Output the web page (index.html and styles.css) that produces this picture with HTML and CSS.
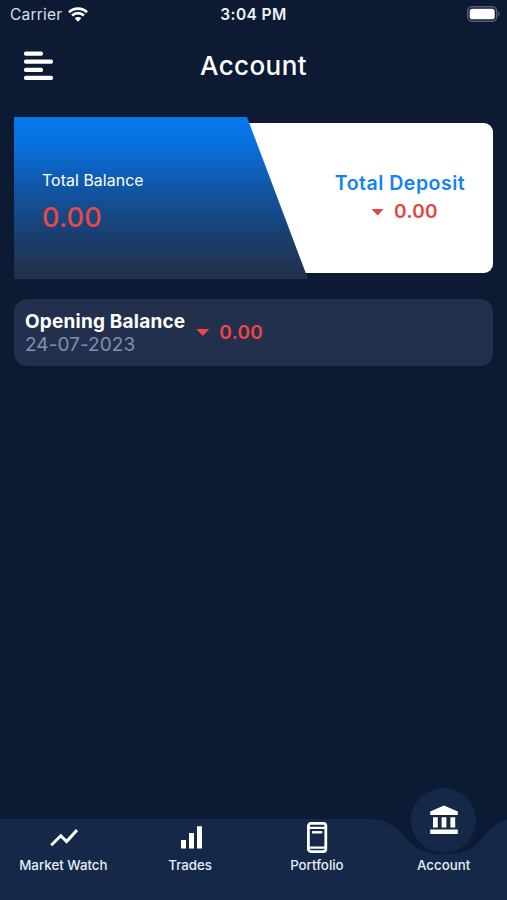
FILE: index.html
```
<!DOCTYPE html>
<html lang="en">
<head>
<meta charset="utf-8">
<title>Account</title>
<link rel="stylesheet" href="styles.css">
</head>
<body>
<div class="app">
  <div class="status">
    <div class="carrier"><span>Carrier</span>
      <svg width="20" height="15" viewBox="0 0 20 15" fill="none" stroke="#fff" stroke-width="2.7"><path d="M1 5.2C6 .3 14 .3 19 5.2M4.1 8.5c3.3-3.2 8.5-3.2 11.8 0"/><path d="M6.7 11.3c1.8-1.7 4.8-1.7 6.6 0L10 14.7z" fill="#fff" stroke="none"/></svg>
    </div>
    <span class="time">3:04 PM</span>
    <svg class="battery" width="33" height="16" viewBox="0 0 33 16"><rect x=".7" y=".7" width="29" height="14.6" rx="4.5" fill="none" stroke="#56617b" stroke-width="1.4"/><rect x="2.7" y="2.7" width="25" height="10.6" rx="2.6" fill="#fff"/><path d="M31.3 5.5c1.8.6 1.8 4.4 0 5z" fill="#56617b"/></svg>
  </div>
  <header class="header">
    <svg width="29" height="30" viewBox="0 0 29 30" fill="#fff"><rect x="0" y=".5" width="19" height="4.2" rx="1.7"/><rect x="0" y="8.6" width="29" height="4.2" rx="1.7"/><rect x="0" y="16.7" width="19" height="4.2" rx="1.7"/><rect x="0" y="24.8" width="29" height="4.2" rx="1.7"/></svg>
    <h1>Account</h1>
  </header>
  <main>
    <section class="summary">
      <div class="balance"><span class="label">Total Balance</span><span class="figure">0.00</span></div>
      <div class="deposit">
        <span class="label">Total Deposit</span>
        <span class="amount"><i class="down"></i>0.00</span>
      </div>
    </section>
    <section class="entry">
      <div class="what"><b>Opening Balance</b><span>24-07-2023</span></div>
      <span class="amount"><i class="down"></i>0.00</span>
    </section>
  </main>
  <nav class="nav">
    <svg class="bar" width="507" height="81" viewBox="0 0 507 81"><path d="M0 0H367C383 0 393 5 402 15C413 28 420 35 444 35S474 29 485 16C493 7 499 3 507 1V81H0Z" fill="#152848"/></svg>
    <a class="tab"><svg width="30" height="32" viewBox="0 0 30 32" fill="none" stroke="#fff" stroke-width="3"><path d="M3.2 24.3l9.6-9.5 5.8 5.8L29 9"/></svg><span>Market Watch</span></a>
    <a class="tab"><svg width="24" height="32" viewBox="0 0 24 32" fill="#fff"><path d="M3 19h5v8.500H3zM11 12h5v15.500h-5zM19 5.300h5v22.200h-5z"/></svg><span>Trades</span></a>
    <a class="tab"><svg width="22" height="32" viewBox="0 0 22 32" fill="none" stroke="#fff"><rect x="2.400" y="2.400" width="17.400" height="28.200" rx="2.500" stroke-width="2.800"/><path d="M3 6.900h16M3 26.600h16" stroke-width="2.200"/><path d="M6 11.300h10.300" stroke-width="2.400"/></svg><span>Portfolio</span></a>
    <a class="tab active"><i class="bubble"><svg width="28" height="30" viewBox="0 0 28 30" fill="#fff"><path d="M14 .5L27.800 6.500v3.500H.2V6.500zM3 12.300h4.800v10.200H3zM11.600 12.300h4.800v10.200h-4.800zM20.400 12.300h4.800v10.200h-4.800zM.2 24.600h27.600v4.400H.2z"/></svg></i><span>Account</span></a>
  </nav>
</div>
</body>
</html>
```
FILE: styles.css
```
* { box-sizing: border-box; }
body { margin: 0; background: #0c1a33; font-family: Inter, "Liberation Sans", sans-serif; color: #fff; }
.app { width: 507px; height: 900px; display: flex; flex-direction: column; overflow: hidden; }
.app span, .app b, h1 { white-space: nowrap; }
svg { display: block; flex: none; }
.status { height: 30px; display: grid; grid-template-columns: 1fr auto 1fr; align-items: center; padding: 0 7px 0 10px; }
.carrier { display: flex; align-items: center; gap: 6px; font-size: 15.5px; color: #d9dfeb; letter-spacing: .2px; margin-top: -1px; }
.time { font-size: 15.5px; font-weight: 600; color: #eef2fa; letter-spacing: .4px; margin: -1px 2px 0 -1px; }
.battery { justify-self: end; margin-top: -3px; }
.header { height: 72px; display: grid; grid-template-columns: 29px 1fr 29px; align-items: center; padding: 0 24px; }
h1 { margin: 0; text-align: center; font-size: 26px; line-height: 32px; font-weight: 500; letter-spacing: .4px; }
main { flex: 1; padding: 15px 14px 0; }
.summary { height: 162px; display: grid; grid-template-columns: 294px 1fr; position: relative; }
.summary::before { content: ""; position: absolute; inset: 6px 0; background: #fff; border-radius: 9px; }
.balance { position: relative; display: flex; flex-direction: column; padding: 54px 28px 0; background: linear-gradient(#0479ef 0%, #0870dc 18%, #11539f 47%, #1b3d6b 75%, #22304c 97%); clip-path: polygon(0 0, 233px 0, 294px 100%, 0 100%); }
.balance .label { font-size: 15.8px; line-height: 20px; letter-spacing: .1px; }
.figure { margin-top: 11px; font-size: 27px; line-height: 32px; font-weight: 500; color: #ee4545; letter-spacing: .2px; }
.deposit { position: relative; display: flex; flex-direction: column; align-items: center; padding: 54px 1px 0 0; }
.deposit .label { color: #1583ee; font-size: 19.5px; line-height: 24px; font-weight: 600; letter-spacing: .5px; }
.amount { display: flex; align-items: center; gap: 10px; color: #ee4545; font-size: 19px; line-height: 24px; font-weight: 600; letter-spacing: .3px; }
.deposit .amount { margin: 5px 0 0 9px; color: #e54440; }
.down { width: 13px; height: 7px; background: currentColor; clip-path: polygon(0 0, 100% 0, 50% 100%); }
.entry { margin-top: 20px; height: 67px; border-radius: 13px; background: #22304d; display: flex; align-items: center; gap: 11px; padding: 0 11px; }
.what { display: flex; flex-direction: column; font-size: 19px; line-height: 23px; }
.what b { letter-spacing: .2px; }
.what span { color: #8190ad; letter-spacing: .05px; }
.nav { position: relative; height: 81px; display: grid; grid-template-columns: repeat(4, 1fr); }
.bar { position: absolute; inset: 0; }
.tab { position: relative; display: flex; flex-direction: column; align-items: center; padding-top: 2px; font-size: 13.3px; line-height: 18px; font-weight: 500; color: #e8edf6; }
.tab span { margin-top: 3px; }
.bubble { display: flex; align-items: center; justify-content: center; width: 65px; height: 65px; margin-top: -33px; padding-bottom: 2px; border-radius: 50%; background: #152848; }
```
